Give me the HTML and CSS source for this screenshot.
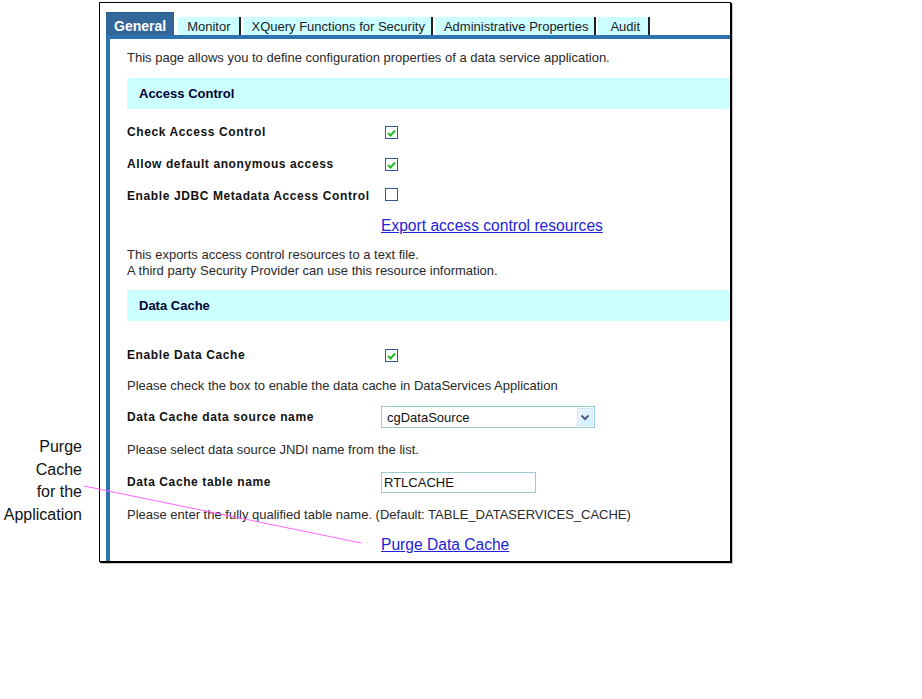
FILE: index.html
```html
<!DOCTYPE html>
<html>
  <head>
    <title>Data Service Application</title>
    <link rel="stylesheet" href="styles.css">
  </head>
  <body>
    <div class="callout">Purge<br>Cache<br>for the<br>Application</div>
    <svg class="callout-line" width="922" height="699">
      <line x1="84" y1="486" x2="361" y2="543" stroke="#ff66ff" stroke-width="1"/>
    </svg>

    <div class="frame">
      <div class="tabs">
        <div class="tab active">General</div>
        <div class="tab monitor">Monitor</div>
        <div class="tab">XQuery Functions for Security</div>
        <div class="tab">Administrative Properties</div>
        <div class="tab audit">Audit</div>
      </div>

      <div class="panel">
        <div class="intro">This page allows you to define configuration properties of a data service application.</div>

        <div class="section-head">Access Control</div>
        <div class="section-body first">
          <div class="field">
            <div class="label">Check Access Control</div>
            <div class="control"><span class="check on"><svg width="9" height="8" viewBox="0 0 9 8"><path d="M1 4 L3.5 6.5 L8 1.5" fill="none" stroke="#22bb22" stroke-width="2"/></svg></span></div>
          </div>
          <div class="field">
            <div class="label">Allow default anonymous access</div>
            <div class="control"><span class="check on"><svg width="9" height="8" viewBox="0 0 9 8"><path d="M1 4 L3.5 6.5 L8 1.5" fill="none" stroke="#22bb22" stroke-width="2"/></svg></span></div>
          </div>
          <div class="field">
            <div class="label">Enable JDBC Metadata Access Control</div>
            <div class="control"><span class="check"></span></div>
          </div>
          <div class="link-row export">
            <a href="#">Export access control resources</a>
          </div>
          <p class="note">This exports access control resources to a text file.<br>A third party Security Provider can use this resource information.</p>
        </div>

        <div class="section-head">Data Cache</div>
        <div class="section-body cache">
          <div class="field">
            <div class="label">Enable Data Cache</div>
            <div class="control"><span class="check on"><svg width="9" height="8" viewBox="0 0 9 8"><path d="M1 4 L3.5 6.5 L8 1.5" fill="none" stroke="#22bb22" stroke-width="2"/></svg></span></div>
          </div>
          <div class="hint short">Please check the box to enable the data cache in DataServices Application</div>
          <div class="field">
            <div class="label">Data Cache data source name</div>
            <div class="control">
              <div class="select">
                <span class="select-text">cgDataSource</span>
                <span class="select-btn"><svg width="10" height="7" viewBox="0 0 10 7"><path d="M1.5 1.5 L5 5 L8.5 1.5" fill="none" stroke="#4a5a80" stroke-width="2"/></svg></span>
              </div>
            </div>
          </div>
          <div class="hint">Please select data source JNDI name from the list.</div>
          <div class="field">
            <div class="label">Data Cache table name</div>
            <div class="control"><input class="text-input" type="text" value="RTLCACHE"></div>
          </div>
          <div class="hint">Please enter the fully qualified table name. (Default: TABLE_DATASERVICES_CACHE)</div>
          <div class="link-row purge">
            <a href="#">Purge Data Cache</a>
          </div>
        </div>
      </div>
    </div>
  </body>
</html>
```

FILE: styles.css
```css
* {
  box-sizing: border-box;
  margin: 0;
  padding: 0;
}

body {
  background: #fff;
  color: #2a2a2a;
  font-family: "Liberation Sans", Arial, sans-serif;
  font-size: 13px;
  width: 922px;
  height: 699px;
  position: relative;
  overflow: hidden;
}

/* annotation on the left with its pointer line */
.callout {
  position: absolute;
  left: 0;
  top: 436px;
  width: 82px;
  text-align: right;
  font-size: 16px;
  line-height: 22.7px;
  color: #111;
}

.callout-line {
  position: absolute;
  left: 0;
  top: 0;
  pointer-events: none;
  z-index: 2;
}

/* outer window */
.frame {
  margin: 2px 0 0 99px;
  width: 632px;
  height: 560px;
  border: 1px solid #000;
  box-shadow: 1px 1px 0 #000, 2px 2px 0 #c8c8c8;
  padding: 9px 0 0 6px;
  display: flex;
  flex-direction: column;
}

/* tabs */
.tabs {
  display: flex;
  align-items: flex-end;
  height: 23px;
}

.tab {
  height: 18px;
  line-height: 19px;
  font-size: 13px;
  background: #ccffff;
  color: #1a1a2a;
  padding: 0 6px 0 9px;
  border-right: 2px solid #222;
  margin-left: 2px;
  white-space: nowrap;
}

.tab.monitor {
  padding: 0 8px 0 9px;
  margin-left: 4px;
}

.tab.audit {
  padding: 0 8px 0 12px;
}

.tab.active {
  height: 23px;
  line-height: 26px;
  background: #336699;
  color: #fff;
  font-weight: bold;
  font-size: 14px;
  padding: 0 8px 0 8px;
  border-right: none;
  margin-left: 0;
  border-top: 1px solid #2a5a8a;
}

.panel {
  flex: 1;
  border-top: 4px solid #2f72b0;
  border-left: 4px solid #2f72b0;
  padding-left: 17px;
}

.intro {
  height: 39px;
  line-height: 38px;
}

.section-head {
  height: 31px;
  line-height: 31px;
  background: #ccffff;
  color: #000033;
  font-weight: bold;
  font-size: 13px;
  padding-left: 12px;
}

.section-body.first {
  padding-top: 7px;
}

.section-body.cache {
  padding-top: 18px;
}

.field {
  display: flex;
  align-items: center;
  height: 32px;
}

.field .label {
  width: 254px;
  font-weight: bold;
  font-size: 12px;
  letter-spacing: 0.6px;
  color: #111;
}

.check {
  display: inline-flex;
  align-items: center;
  justify-content: center;
  width: 13px;
  height: 13px;
  margin-left: 4px;
  border: 1px solid #2c5d8c;
  background: #fff;
}

.link-row {
  display: flex;
  align-items: center;
  padding-left: 254px;
}

.link-row a {
  font-size: 15.6px;
  color: #2323d6;
  text-decoration: underline;
}

.link-row.export {
  height: 28px;
}

.link-row.purge {
  height: 28px;
}

.note {
  margin-top: 7px;
  line-height: 16px;
  margin-bottom: 11px;
}

.hint {
  height: 33px;
  line-height: 33px;
}

.hint.short {
  height: 30px;
  line-height: 30px;
}

/* drop-down drawn as a box with its arrow button */
.select {
  display: flex;
  align-items: center;
  width: 214px;
  height: 22px;
  border: 1px solid #99cccc;
  background: #fff;
  padding: 1px;
}

.select-text {
  flex: 1;
  font-size: 13px;
  padding-left: 4px;
  color: #111;
}

.select-btn {
  display: flex;
  align-items: center;
  justify-content: center;
  width: 16px;
  height: 18px;
  background: linear-gradient(135deg, #eef2ff, #c8f4ff);
  border: 1px solid #d6e2ff;
}

.text-input {
  width: 155px;
  height: 21px;
  border: 1px solid #99cccc;
  font-family: "Liberation Sans", Arial, sans-serif;
  font-size: 13px;
  padding-left: 2px;
  color: #111;
  outline: none;
}
```
